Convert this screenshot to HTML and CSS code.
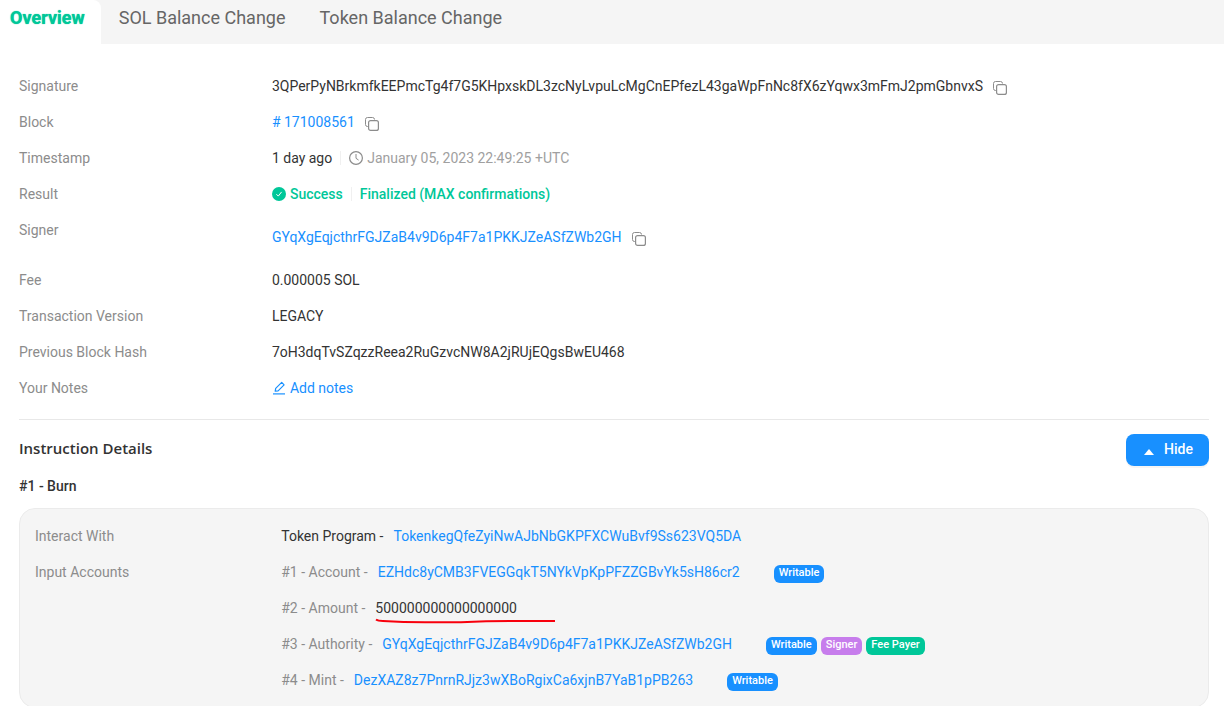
FILE: index.html
```html
<!DOCTYPE html>
<html lang="en">

<head>
    <meta charset="UTF-8">
    <meta name="viewport" content="width=device-width, initial-scale=1.0">
    <title>Transaction Details</title>
    <link rel="stylesheet" href="styles.css">
</head>

<body>
    <svg class="sprite" aria-hidden="true">
        <symbol id="icon-copy" viewBox="0 0 14 14">
            <path d="M3.5 9.5H2.5a2 2 0 0 1-2-2v-5a2 2 0 0 1 2-2h5a2 2 0 0 1 2 2" fill="none" stroke="currentColor" />
            <rect x="3.6" y="3.6" width="9.8" height="9.8" rx="2" fill="none" stroke="currentColor" stroke-width="1.2" />
        </symbol>
    </svg>

    <nav class="tabs">
        <a href="#" class="tab active">Overview</a>
        <a href="#" class="tab">SOL Balance Change</a>
        <a href="#" class="tab">Token Balance Change</a>
    </nav>

    <main class="content">
        <dl class="details">
            <div class="row">
                <dt>Signature</dt>
                <dd>
                    <span>3QPerPyNBrkmfkEEPmcTg4f7G5KHpxskDL3zcNyLvpuLcMgCnEPfezL43gaWpFnNc8fX6zYqwx3mFmJ2pmGbnvxS</span>
                    <button class="copy-btn" aria-label="Copy signature"><svg><use href="#icon-copy" /></svg></button>
                </dd>
            </div>
            <div class="row">
                <dt>Block</dt>
                <dd>
                    <a href="#"># 171008561</a>
                    <button class="copy-btn" aria-label="Copy block"><svg><use href="#icon-copy" /></svg></button>
                </dd>
            </div>
            <div class="row">
                <dt>Timestamp</dt>
                <dd>
                    <span>1 day ago</span>
                    <span class="divider"></span>
                    <span class="with-icon time">
                        <svg class="icon" viewBox="0 0 14 14" fill="none" stroke="currentColor">
                            <circle cx="7" cy="7" r="6.4" stroke-width="1.2" />
                            <path d="M7 3v4.3l2.6 1.8" />
                        </svg>
                        January 05, 2023 22:49:25 +UTC
                    </span>
                </dd>
            </div>
            <div class="row">
                <dt>Result</dt>
                <dd class="success">
                    <span class="with-icon">
                        <svg class="icon" viewBox="0 0 14 14">
                            <circle cx="7" cy="7" r="7" fill="currentColor" />
                            <path d="M4.4 7.2l1.9 1.9 3.3-4.2" fill="none" stroke="#fff" />
                        </svg>
                        Success
                    </span>
                    <span class="divider"></span>
                    <span>Finalized (MAX confirmations)</span>
                </dd>
            </div>
            <div class="row row-tall">
                <dt>Signer</dt>
                <dd>
                    <a href="#">GYqXgEqjcthrFGJZaB4v9D6p4F7a1PKKJZeASfZWb2GH</a>
                    <button class="copy-btn" aria-label="Copy signer"><svg><use href="#icon-copy" /></svg></button>
                </dd>
            </div>
            <div class="row">
                <dt>Fee</dt>
                <dd>0.000005 SOL</dd>
            </div>
            <div class="row">
                <dt>Transaction Version</dt>
                <dd>LEGACY</dd>
            </div>
            <div class="row">
                <dt>Previous Block Hash</dt>
                <dd>7oH3dqTvSZqzzReea2RuGzvcNW8A2jRUjEQgsBwEU468</dd>
            </div>
            <div class="row">
                <dt>Your Notes</dt>
                <dd>
                    <a href="#" class="with-icon">
                        <svg class="icon" viewBox="0 0 14 14" fill="none" stroke="currentColor" stroke-width="1.2">
                            <path d="M3.2 10.2l.5-2.8 6-6 2.4 2.4-6 6z" stroke-linejoin="round" />
                            <path d="M1 12.9h12" />
                        </svg>
                        Add notes
                    </a>
                </dd>
            </div>
        </dl>

        <section class="instructions">
            <div class="section-header">
                <h2>Instruction Details</h2>
                <button class="hide-btn">
                    <svg viewBox="0 0 10 6"><path d="M5 0l5 6H0z" fill="currentColor" /></svg>
                    Hide
                </button>
            </div>
            <h3>#1 - Burn</h3>

            <dl class="card">
                <div class="row">
                    <dt>Interact With</dt>
                    <dd class="account">
                        <span>Token Program -</span>
                        <a href="#">TokenkegQfeZyiNwAJbNbGKPFXCWuBvf9Ss623VQ5DA</a>
                    </dd>
                </div>
                <div class="row">
                    <dt>Input Accounts</dt>
                    <dd class="account">
                        <span class="name">#1 - Account -</span>
                        <a href="#">EZHdc8yCMB3FVEGGqkT5NYkVpKpPFZZGBvYk5sH86cr2</a>
                        <span class="tags">
                            <span class="tag">Writable</span>
                        </span>
                    </dd>
                    <dd class="account">
                        <span class="name">#2 - Amount -</span>
                        <span class="amount">500000000000000000
                            <svg class="underline" viewBox="0 0 180 6" fill="none">
                                <path d="M1 1.5Q3 3 8 3Q28 4.200 50 4.200H86Q112 3 135 3H180" />
                            </svg>
                        </span>
                    </dd>
                    <dd class="account">
                        <span class="name">#3 - Authority -</span>
                        <a href="#">GYqXgEqjcthrFGJZaB4v9D6p4F7a1PKKJZeASfZWb2GH</a>
                        <span class="tags">
                            <span class="tag">Writable</span>
                            <span class="tag tag-signer">Signer</span>
                            <span class="tag tag-payer">Fee Payer</span>
                        </span>
                    </dd>
                    <dd class="account">
                        <span class="name">#4 - Mint -</span>
                        <a href="#">DezXAZ8z7PnrnRJjz3wXBoRgixCa6xjnB7YaB1pPB263</a>
                        <span class="tags">
                            <span class="tag">Writable</span>
                        </span>
                    </dd>
                </div>
            </dl>
        </section>
    </main>
</body>

</html>
```
FILE: styles.css
```css
* {
    box-sizing: border-box;
}

body {
    margin: 0;
    font-family: Roboto, "Liberation Sans", sans-serif;
    font-size: 14px;
    line-height: 20px;
    color: #333;
    background-color: #fff;
}

a {
    color: #1890ff;
    text-decoration: none;
}

button {
    font-family: inherit;
    font-size: inherit;
    border: none;
    cursor: pointer;
}

.sprite {
    display: none;
}

/* tabs */
.tabs {
    display: flex;
    gap: 2px;
    background-color: #f5f5f5;
}

.tab {
    height: 44px;
    padding: 6px 16px;
    font-size: 18px;
    line-height: 24px;
    color: #666;
}

.tab.active {
    padding: 6px 16px 6px 10px;
    font-weight: 700;
    color: #00c799;
    text-shadow: 0 0 1px currentColor;
    background-color: #fff;
    border-top-right-radius: 8px;
}

/* overview rows, 5/24 label column */
.content {
    padding: 24px 15px 0 19px;
}

.details,
.card {
    margin: 0;
}

.row {
    display: grid;
    grid-template-columns: 5fr 19fr;
    margin: 0 -12px;
}

.row dt,
.row dd {
    margin: 0;
    padding: 8px 12px;
    min-width: 0;
}

.row dt {
    color: #8c8c8c;
}

.row dd {
    grid-column: 2;
    display: flex;
    align-items: center;
    white-space: nowrap;
}

.row-tall dd {
    min-height: 50px;
}

.copy-btn {
    display: flex;
    margin: 4px 0 0 10px;
    padding: 0;
    color: #8c8c8c;
    background: none;
}

.copy-btn svg {
    width: 14px;
    height: 14px;
}

.divider {
    width: 1px;
    height: 14px;
    margin: 0 8px;
    background-color: #f0f0f0;
}

.with-icon {
    display: flex;
    align-items: center;
    gap: 4px;
}

.icon {
    width: 14px;
    height: 14px;
}

.time {
    color: #a0a0a0;
}

.time .icon {
    color: #8c8c8c;
}

.row .success {
    font-weight: 500;
    color: #00c799;
}

/* instructions */
.instructions {
    margin-top: 13px;
    border-top: 1px solid #e8e8e8;
}

.section-header {
    display: flex;
    justify-content: space-between;
    align-items: center;
    padding-top: 14px;
}

h2 {
    margin: 0 0 4px;
    font-family: "Open Sans", sans-serif;
    font-size: 15px;
    font-weight: 600;
}

h3 {
    margin: 10px 0 12px;
    font-size: 14px;
    font-weight: 500;
}

.hide-btn {
    display: flex;
    align-items: center;
    gap: 10px;
    height: 32px;
    padding: 0 16px 2px 18px;
    font-weight: 500;
    color: #fff;
    background-color: #1890ff;
    border-radius: 8px;
    box-shadow: 0 2px 0 rgba(0, 0, 0, 0.04);
}

.hide-btn svg {
    width: 10px;
    height: 6px;
    margin-top: 6px;
}

.card {
    padding: 9px 15px;
    background-color: #f5f5f5;
    border: 1px solid #ebebeb;
    border-radius: 16px;
}

.account {
    gap: 10px;
}

.name {
    color: #8c8c8c;
}

.amount {
    position: relative;
}

/* hand drawn mark below the amount */
.underline {
    position: absolute;
    left: 0;
    top: 20px;
    width: 180px;
    height: 6px;
    stroke: #f8000c;
    stroke-width: 2;
}

.tags {
    display: flex;
    gap: 4px;
    margin: 3px 0 -1px 24px;
}

.tag {
    height: 18px;
    padding: 0 5px;
    font-size: 11px;
    font-weight: 500;
    line-height: 16px;
    color: #fff;
    background-color: #1890ff;
    border-radius: 6px;
}

.tag-signer {
    background-color: #c77dec;
}

.tag-payer {
    background-color: #00c799;
}
```
